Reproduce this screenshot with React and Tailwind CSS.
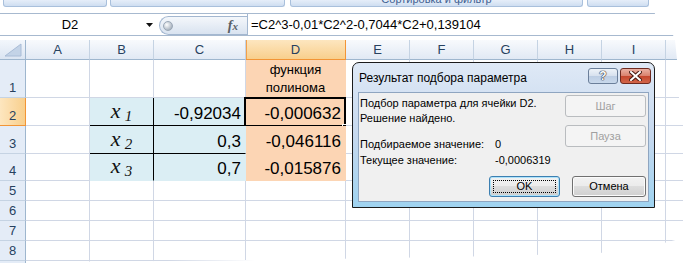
import React from 'react';

const COLS = [
  { l: 'A', w: 'w-[64px]' },
  { l: 'B', w: 'w-[64px]' },
  { l: 'C', w: 'w-[92px]' },
  { l: 'D', w: 'w-[100px]' },
  { l: 'E', w: 'w-[64px]' },
  { l: 'F', w: 'w-[64px]' },
  { l: 'G', w: 'w-[64px]' },
  { l: 'H', w: 'w-[64px]' },
  { l: 'I', w: 'w-[64px]' },
  { l: '', w: 'w-[64px]' },
];

const ROWS = [
  { n: 1, h: 'h-[38px]' },
  { n: 2, h: 'h-[28px]' },
  { n: 3, h: 'h-[28px]' },
  { n: 4, h: 'h-[27px]' },
  { n: 5, h: 'h-[20px]' },
  { n: 6, h: 'h-[20px]' },
  { n: 7, h: 'h-[20px]' },
  { n: 8, h: 'h-[20px]' },
  { n: 0, h: 'h-[20px]' },
];

const NUMS = {
  2: ['-0,92034', '-0,000632'],
  3: ['0,3', '-0,046116'],
  4: ['0,7', '-0,015876'],
};

function cellClass(r, c) {
  if (c === 1 && r >= 2 && r <= 4)
    return `bg-[#dbeef4] border-r-black ${r < 4 ? 'border-b-black' : 'border-b-[#dbeef4]'}`;
  if (c === 2 && r >= 2 && r <= 4)
    return `bg-[#dbeef4] border-r-[#dbeef4] ${r < 4 ? 'border-b-black' : 'border-b-[#dbeef4]'}`;
  if (c === 3 && r >= 1 && r <= 4) return 'bg-[#fcd5b4] border-r-[#fcd5b4] border-b-[#fcd5b4]';
  return 'bg-white border-r-[#d0d7e5] border-b-[#d0d7e5]';
}

function XLabel({ n }) {
  return (
    <span className="font-['Liberation_Serif',serif] italic text-[#111] leading-[24px] whitespace-nowrap">
      <span className="text-[22px]">x</span>
      <span className="ml-[4px] text-[15px] relative top-[3px]">{n}</span>
    </span>
  );
}

function CellContent({ r, c }) {
  if (c === 3 && r === 1) {
    return (
      <div className="h-full flex flex-col items-center justify-end text-[13px] leading-[18px] text-black">
        <span>функция</span>
        <span>полинома</span>
      </div>
    );
  }
  if (c === 1 && r >= 2 && r <= 4) {
    return (
      <div className="h-full flex items-end justify-center">
        <XLabel n={r - 1} />
      </div>
    );
  }
  if ((c === 2 || c === 3) && r >= 2 && r <= 4) {
    return (
      <div className="h-full flex items-end justify-end pr-[4px] pb-[1px] text-[17px] leading-[20px] text-black">
        {NUMS[r][c - 2]}
      </div>
    );
  }
  return null;
}

function Ribbon() {
  const tab =
    'h-[7px] rounded-b-[3px] border border-t-0 border-[#a9c0dc] bg-gradient-to-b from-[#e6eef9] to-[#cfdef1] shrink-0';
  return (
    <div className="h-[13px] flex items-start">
      <div className={`${tab} ml-[3px] w-[104px]`} />
      <div className={`${tab} ml-[3px] w-[175px]`} />
      <div className={`${tab} ml-[5px] w-[293px] overflow-hidden flex justify-center`}>
        <span className="text-[11px] leading-[11px] -mt-[6px] text-[#3f5f91]">Сортировка и фильтр</span>
      </div>
      <div className={`${tab} ml-[4px] w-[62px]`} />
    </div>
  );
}

function FormulaBar() {
  return (
    <div className="h-[23px] flex border-t border-b border-[#a7b9cf] bg-white">
      <div className="w-[159px] shrink-0 flex items-center relative">
        <div className="w-[140px] text-center text-[13px] leading-[21px] text-black">D2</div>
        <svg className="absolute left-[146px] top-[9px]" width="7" height="4" viewBox="0 0 7 4">
          <polygon points="0,0 7,0 3.5,4" fill="#111" />
        </svg>
      </div>
      <div className="mt-[2px] h-[19px] w-[88px] shrink-0 rounded-l-full border border-r-0 border-[#a3b7d0] bg-gradient-to-b from-[#f4f7fb] to-[#d9e3f0] flex items-center">
        <div className="ml-[3px] w-[10px] h-[10px] rounded-full bg-[radial-gradient(circle_at_35%_35%,#ffffff,#b9c2cc_60%,#8d98a6)] border border-[#9aa7b6]" />
        <span className="ml-auto mr-[9px] font-['Liberation_Serif',serif] italic font-bold text-[14px] leading-[14px] text-[#5a5f66]">
          f<span className="text-[11px]">x</span>
        </span>
      </div>
      <div className="w-px bg-[#a3b7d0] shrink-0" />
      <div className="pl-[3px] text-[13px] leading-[21px] text-black whitespace-nowrap">
        =C2^3-0,01*C2^2-0,7044*C2+0,139104
      </div>
    </div>
  );
}

function Sheet() {
  return (
    <div className="flex flex-col">
      <div className="h-[20px] flex">
        <div className="w-[26px] shrink-0 border-r border-b border-[#9eb6ce] bg-gradient-to-b from-[#f3f7fc] to-[#dbe5f2] relative">
          <svg className="absolute left-[4px] top-[3px]" width="18" height="14" viewBox="0 0 18 14">
            <polygon points="1,13 17,13 17,1" fill="#c3d3e7" stroke="#a9bcd6" strokeWidth="1" />
          </svg>
        </div>
        {COLS.map((col, i) =>
          col.l === 'D' ? (
            <div
              key={i}
              className={`${col.w} shrink-0 border-r border-b border-[#f29536] shadow-[inset_1px_0_0_#f2a04a] bg-gradient-to-b from-[#fde6bf] to-[#f8cf8c] flex items-center justify-center text-[13px] text-[#27415f]`}
            >
              {col.l}
            </div>
          ) : (
            <div
              key={i}
              className={`${col.w} shrink-0 border-r border-r-[#c5d3e3] border-b border-b-[#9eb6ce] bg-gradient-to-b from-[#f8fafd] to-[#e1e9f4] flex items-center justify-center text-[13px] text-[#27415f]`}
            >
              {col.l}
            </div>
          )
        )}
      </div>
      {ROWS.map((row, ri) => (
        <div key={ri} className={`${row.h} flex`}>
          <div
            className={`w-[26px] shrink-0 border-r border-b flex items-end justify-center pb-[1px] text-[13px] leading-[16px] text-[#27415f] ${
              row.n === 2
                ? 'border-[#f29536] bg-gradient-to-r from-[#fde6bf] to-[#f8cf8c]'
                : 'border-r-[#9eb6ce] border-b-[#c5d3e3] bg-[#e4ecf7]'
            }`}
          >
            {row.n > 0 ? row.n : ''}
          </div>
          {COLS.map((col, ci) => (
            <div key={ci} className={`${col.w} shrink-0 border-r border-b relative ${cellClass(row.n, ci)}`}>
              <CellContent r={row.n} c={ci} />
              {row.n === 2 && ci === 3 && (
                <>
                  <div className="absolute -left-[2px] -top-[1px] w-[102px] h-[30px] border-2 border-black" />
                  <div className="absolute left-[96px] top-[26px] w-[6px] h-[6px] bg-black border border-white" />
                </>
              )}
            </div>
          ))}
        </div>
      ))}
    </div>
  );
}

function Btn({ children, className = '', disabled, focused }) {
  if (disabled) {
    return (
      <div
        className={`rounded-[3px] border border-[#b9bcbf] bg-[#f4f4f4] flex items-center justify-center text-[11px] text-[#a0a0a0] ${className}`}
      >
        {children}
      </div>
    );
  }
  return (
    <div
      className={`relative rounded-[3px] border ${
        focused ? 'border-[#3c7fb1] shadow-[inset_0_0_0_1px_#aee3fb]' : 'border-[#707070] shadow-[inset_0_0_0_1px_#fbfbfb]'
      } bg-[linear-gradient(#f2f2f2_0%,#ebebeb_50%,#dddddd_50%,#cfcfcf_100%)] flex items-center justify-center text-[11px] text-black ${className}`}
    >
      {children}
      {focused && <div className="absolute inset-[3px] border border-dotted border-black" />}
    </div>
  );
}

function Dialog() {
  return (
    <div className="absolute left-[352px] top-[62px] w-[303px] h-[146px] rounded-t-[7px] border border-[#1b1b1b] bg-gradient-to-b from-[#dfe9f6] via-[#c6d8ee] to-[#9fd3f0] px-[5px] pb-[5px] flex flex-col font-['Liberation_Sans',sans-serif]">
      <div className="h-[29px] shrink-0 flex items-start -mr-[2px]">
        <div className="pt-[7px] pl-[1px] text-[12px] leading-[16px] text-black">Результат подбора параметра</div>
        <div className="ml-auto mt-[5px] flex gap-[2px]">
          <div className="w-[30px] h-[16px] rounded-[3px] border border-[#6b7f9a] bg-[linear-gradient(#eef3f9_0%,#d6e1ee_50%,#bccde3_50%,#c9d9ec_100%)] flex items-center justify-center text-[12px] leading-[12px] font-bold text-white [text-shadow:0_0_1px_#223,0_0_1px_#223,0_0_1px_#223]">
            ?
          </div>
          <div className="w-[31px] h-[16px] rounded-[3px] border border-[#6e2a20] bg-[linear-gradient(#eab0a2_0%,#d9806c_50%,#c4452c_50%,#d2664a_100%)] flex items-center justify-center">
            <svg width="13" height="10" viewBox="0 0 13 10">
              <path d="M2 1 L11 9 M11 1 L2 9" stroke="#4a1c14" strokeWidth="4" strokeLinecap="square" />
              <path d="M2 1 L11 9 M11 1 L2 9" stroke="#ffffff" strokeWidth="2" strokeLinecap="square" />
            </svg>
          </div>
        </div>
      </div>
      <div className="flex-1 bg-[#f0f0f0] border border-[#8fa5c0] flex flex-col">
        <div className="flex">
          <div className="flex-1 pl-[1px] pt-[3px] text-[11px] text-black">
            <div className="leading-[15px]">Подбор параметра для ячейки D2.</div>
            <div className="leading-[15px]">Решение найдено.</div>
            <div className="mt-[10px] flex leading-[16px]">
              <span className="w-[135px]">Подбираемое значение:</span>
              <span>0</span>
            </div>
            <div className="flex leading-[16px]">
              <span className="w-[135px]">Текущее значение:</span>
              <span>-0,0006319</span>
            </div>
          </div>
          <div className="w-[81px] mr-[2px] mt-[2px] flex flex-col gap-[8px]">
            <Btn disabled className="h-[22px]">Шаг</Btn>
            <Btn disabled className="h-[22px]">Пауза</Btn>
          </div>
        </div>
        <div className="mt-auto mb-[4px] mr-[2px] flex justify-end gap-[12px]">
          <Btn focused className="w-[71px] h-[21px]">OK</Btn>
          <Btn className="w-[74px] h-[21px]">Отмена</Btn>
        </div>
      </div>
    </div>
  );
}

export default function App() {
  return (
    <div className="relative w-[683px] h-[263px] overflow-hidden bg-white font-['Liberation_Sans',sans-serif]">
      <Ribbon />
      <FormulaBar />
      <div className="h-[4px]" />
      <Sheet />
      <Dialog />
      <svg className="absolute left-0 top-0 pointer-events-none" width="683" height="263" viewBox="0 0 683 263">
        <polygon points="26,263 26,262 166,261 330,259 500,256 600,253 640,248 664,243 683,238 683,263" fill="#ffffff" />
        <polygon points="652,0 683,0 683,100 679,98 677,60 675,40 673,35 655,14" fill="#ffffff" />
      </svg>
    </div>
  );
}
